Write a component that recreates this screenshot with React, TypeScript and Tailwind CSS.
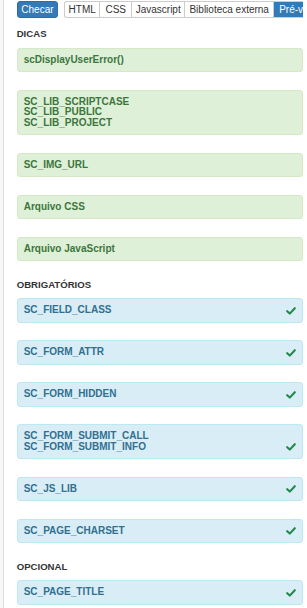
const dicas: string[][] = [
  ["scDisplayUserError()"],
  ["SC_LIB_SCRIPTCASE", "SC_LIB_PUBLIC", "SC_LIB_PROJECT"],
  ["SC_IMG_URL"],
  ["Arquivo CSS"],
  ["Arquivo JavaScript"],
];

const obrigatorios: string[][] = [
  ["SC_FIELD_CLASS"],
  ["SC_FORM_ATTR"],
  ["SC_FORM_HIDDEN"],
  ["SC_FORM_SUBMIT_CALL", "SC_FORM_SUBMIT_INFO"],
  ["SC_JS_LIB"],
  ["SC_PAGE_CHARSET"],
];

const opcional: string[][] = [["SC_PAGE_TITLE"]];

function Check() {
  return (
    <svg width="10" height="8" viewBox="0 0 10 8" className="shrink-0 mb-[1px]">
      <path
        d="M1.2 4.2 L3.8 6.6 L8.8 1.2"
        fill="none"
        stroke="#23884b"
        strokeWidth="2.1"
        strokeLinecap="round"
        strokeLinejoin="round"
      />
    </svg>
  );
}

function SuccessBox({ lines }: { lines: string[] }) {
  return (
    <div className="mb-[17.5px] rounded-[3px] border border-[#d6e9c6] bg-[#dff0d8] px-[6px] py-[6px] text-[10px] font-bold leading-[10.5px] text-[#3c763d]">
      {lines.map((l) => (
        <div key={l}>{l}</div>
      ))}
    </div>
  );
}

function InfoBox({ lines }: { lines: string[] }) {
  return (
    <div className="mb-[17.5px] flex items-end justify-between rounded-[3px] border border-[#bce8f1] bg-[#d9edf7] px-[6px] py-[6px] text-[10px] font-bold leading-[10.5px] text-[#31708f]">
      <div>
        {lines.map((l) => (
          <div key={l}>{l}</div>
        ))}
      </div>
      <Check />
    </div>
  );
}

function Heading({ children }: { children: string }) {
  return (
    <div className="mb-[7.5px] text-[9.6px] font-bold leading-[12px] text-[#333333]">
      {children}
    </div>
  );
}

export default function App() {
  return (
    <div
      className="flex h-[608px] w-[307px] overflow-hidden bg-white"
      style={{ fontFamily: '"Liberation Sans", Arial, sans-serif' }}
    >
      <div className="w-[3px] shrink-0 bg-[#f7f7f7]" />
      <div className="min-w-0 flex-1 border-l border-[#dedede] pl-[12.7px] pr-[3.7px]">
        {/* Toolbar */}
        <div className="mt-[1px] flex h-[17px] items-stretch whitespace-nowrap text-[10px] leading-none">
          <div className="flex w-[41.5px] shrink-0 items-center justify-center rounded-[3px] border border-[#2e6da4] bg-[#337ab7] text-white">
            Checar
          </div>
          <div className="ml-[6px] flex min-w-0 flex-1 overflow-hidden rounded-l-[3px] border border-r-0 border-[#cccccc] bg-white text-[#333333]">
            <div className="flex w-[35px] shrink-0 items-center justify-center border-r border-[#cccccc]">
              HTML
            </div>
            <div className="flex w-[32px] shrink-0 items-center justify-center border-r border-[#cccccc]">
              CSS
            </div>
            <div className="flex w-[53px] shrink-0 items-center justify-center border-r border-[#cccccc]">
              Javascript
            </div>
            <div className="flex w-[89px] shrink-0 items-center justify-center border-r border-[#cccccc]">
              Biblioteca externa
            </div>
            <div className="flex shrink-0 items-center bg-[#337ab7] px-[5px] text-white">
              Pré-visualização
            </div>
          </div>
        </div>

        <div className="mt-[10.4px]">
          <Heading>DICAS</Heading>
          {dicas.map((d) => (
            <SuccessBox key={d[0]} lines={d} />
          ))}

          <Heading>OBRIGATÓRIOS</Heading>
          {obrigatorios.map((d) => (
            <InfoBox key={d[0]} lines={d} />
          ))}

          <Heading>OPCIONAL</Heading>
          {opcional.map((d) => (
            <InfoBox key={d[0]} lines={d} />
          ))}
        </div>
      </div>
    </div>
  );
}
